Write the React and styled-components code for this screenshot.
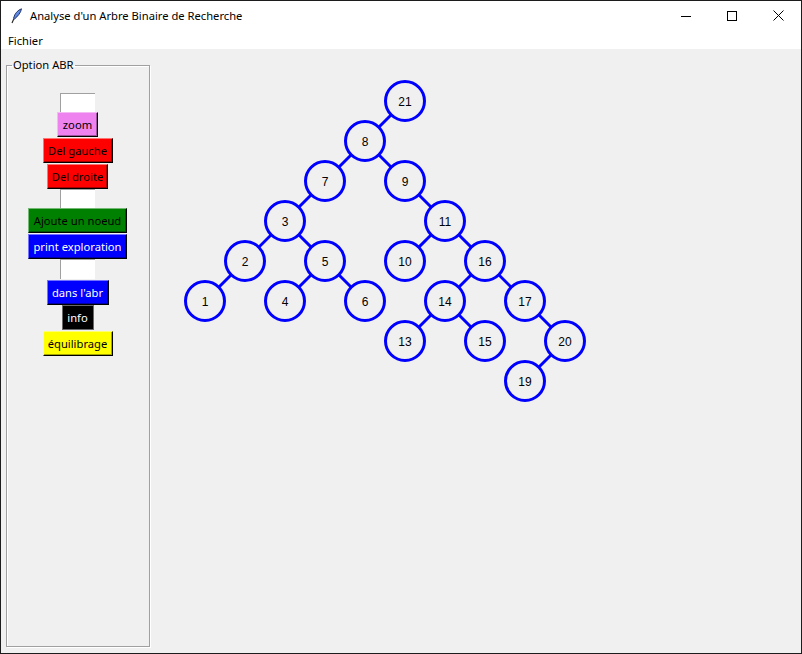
import styled, { createGlobalStyle } from "styled-components"

const GlobalStyle = createGlobalStyle`
    html, body {
        margin: 0;
        padding: 0;
        background: #ffffff;
    }
    * {
        box-sizing: border-box;
    }
`

const nodes = {
    21: [405, 101], 8: [365, 141], 7: [325, 181], 9: [405, 181],
    3: [285, 221], 11: [445, 221], 2: [245, 261], 5: [325, 261],
    10: [405, 261], 16: [485, 261], 1: [205, 301], 4: [285, 301],
    6: [365, 301], 14: [445, 301], 17: [525, 301], 13: [405, 341],
    15: [485, 341], 20: [565, 341], 19: [525, 381],
}

const edges = [
    [21, 8], [8, 7], [8, 9], [7, 3], [9, 11], [3, 2], [3, 5], [11, 10],
    [11, 16], [2, 1], [5, 4], [5, 6], [16, 14], [16, 17], [14, 13],
    [14, 15], [17, 20], [20, 19],
]

// canvas origin in window coords
const OX = 150
const OY = 49

const controls = [
    { label: "", kind: "entry" },
    { label: "zoom", bg: "#ee82ee", w: 41 },
    { label: "Del gauche", bg: "#ff0000", w: 70, gap: 1 },
    { label: "Del droite", bg: "#ff0000", w: 61, gap: 1 },
    { label: "", kind: "entry" },
    { label: "Ajoute un noeud", bg: "#008000", w: 99 },
    { label: "print exploration", bg: "#0000ff", fg: "#ffffff", w: 99, gap: 1 },
    { label: "", kind: "entry", h: 20 },
    { label: "dans l'abr", bg: "#0000ff", fg: "#ffffff", w: 62, gap: 1 },
    { label: "info", bg: "#000000", fg: "#ffffff", w: 32, dark: true },
    { label: "équilibrage", bg: "#ffff00", w: 70, gap: 1 },
]

export default function App() {
    return (
        <Fenetre>
            <GlobalStyle />
            <TitleBar>
                <Plume />
                <Titre>Analyse d'un Arbre Binaire de Recherche</Titre>
                <Controles>
                    <CtrlBtn>
                        <svg width="10" height="10" viewBox="0 0 10 10">
                            <line x1="0" y1="5.5" x2="10" y2="5.5" stroke="#000" strokeWidth="1" />
                        </svg>
                    </CtrlBtn>
                    <CtrlBtn>
                        <svg width="10" height="10" viewBox="0 0 10 10">
                            <rect x="0.5" y="0.5" width="9" height="9" fill="none" stroke="#000" strokeWidth="1" />
                        </svg>
                    </CtrlBtn>
                    <CtrlBtn>
                        <svg width="11" height="11" viewBox="0 0 11 11">
                            <path d="M0.5 0.5 L10.5 10.5 M10.5 0.5 L0.5 10.5" stroke="#000" strokeWidth="1" />
                        </svg>
                    </CtrlBtn>
                </Controles>
            </TitleBar>
            <MenuBar>
                <MenuItem>Fichier</MenuItem>
            </MenuBar>
            <Corps>
                <Cadre>
                    <Legende>Option ABR</Legende>
                    <Pile>
                        {controls.map((c, i) =>
                            c.kind === "entry" ? (
                                <Champ key={i} h={c.h} />
                            ) : (
                                <Bouton key={i} bg={c.bg} fg={c.fg} w={c.w} gap={c.gap} dark={c.dark}>
                                    {c.label}
                                </Bouton>
                            )
                        )}
                    </Pile>
                </Cadre>
                <Toile width="650" height="604" viewBox={`${OX} ${OY} 650 604`}>
                    {edges.map(([a, b]) => (
                        <line
                            key={a + "-" + b}
                            x1={nodes[a][0]} y1={nodes[a][1]}
                            x2={nodes[b][0]} y2={nodes[b][1]}
                            stroke="#0000ff" strokeWidth="3"
                        />
                    ))}
                    {Object.entries(nodes).map(([k, [x, y]]) => (
                        <g key={k}>
                            <circle cx={x} cy={y} r="19.5" fill="#f0f0f0" stroke="#0000ff" strokeWidth="3" />
                            <text x={x} y={y + 4.5} textAnchor="middle">{k}</text>
                        </g>
                    ))}
                </Toile>
            </Corps>
        </Fenetre>
    )
}

function Plume() {
    return (
        <IconBox>
            <svg width="12" height="16" viewBox="0 0 12 16">
                <defs>
                    <linearGradient id="pl" x1="0" y1="0" x2="1" y2="1">
                        <stop offset="0" stopColor="#9cc8ff" />
                        <stop offset="1" stopColor="#1846c8" />
                    </linearGradient>
                </defs>
                <path d="M10.5 0.8 C7 2 3.5 5.5 2.6 10.2 L3.6 11 C6.5 8.5 9.8 5 10.5 0.8 Z" fill="url(#pl)" stroke="#1a2a60" strokeWidth="0.9" />
                <path d="M3 10.6 L1 15" stroke="#222" strokeWidth="1.1" />
            </svg>
        </IconBox>
    )
}

const Fenetre = styled.div`
    width: 802px;
    height: 654px;
    border: 1px solid #1c1c1c;
    background: #f0f0f0;
    display: flex;
    flex-direction: column;
    overflow: hidden;
    font-family: "Noto Sans", "Open Sans", sans-serif;
    font-size: 11.2px;
`

const TitleBar = styled.div`
    height: 30px;
    background: #ffffff;
    display: flex;
    align-items: center;
`

const IconBox = styled.div`
    width: 12px;
    height: 16px;
    margin-left: 10px;
    display: flex;
`

const Titre = styled.div`
    margin-left: 7px;
    color: #000;
    line-height: 16px;
`

const Controles = styled.div`
    margin-left: auto;
    display: flex;
    height: 100%;
`

const CtrlBtn = styled.div`
    width: 46px;
    height: 100%;
    display: flex;
    align-items: center;
    justify-content: center;
`

const MenuBar = styled.div`
    height: 19px;
    background: #ffffff;
    display: flex;
    align-items: center;
    padding-left: 7px;
`

const MenuItem = styled.div`
    line-height: 16px;
    color: #000;
    margin-top: 2px;
`

const Corps = styled.div`
    flex: 1;
    display: flex;
    align-items: flex-start;
    background: #f0f0f0;
`

const Cadre = styled.fieldset`
    margin: 9px 0 0 5px;
    padding: 0;
    width: 144px;
    height: 589px;
    border: 1px solid #a0a0a0;
    box-shadow: 1px 1px 0 #ffffff, inset 1px 1px 0 #ffffff;
    min-width: 0;
`

const Legende = styled.legend`
    margin-left: 5px;
    padding: 0 1px;
    line-height: 14px;
    color: #000;
`

const Pile = styled.div`
    display: flex;
    flex-direction: column;
    align-items: center;
    padding-top: 21px;
    margin-left: -1px;
`

const Champ = styled.div`
    width: 35px;
    height: ${p => p.h || 19}px;
    background: #ffffff;
    border-top: 1px solid #a0a0a0;
    border-left: 1px solid #a0a0a0;
`

const Bouton = styled.div`
    width: ${p => p.w}px;
    height: 25px;
    margin-top: ${p => p.gap || 0}px;
    background: ${p => p.bg};
    color: ${p => p.fg || "#000"};
    font-size: 11.2px;
    display: flex;
    align-items: center;
    justify-content: center;
    white-space: nowrap;
    border-top: 1px solid ${p => (p.dark ? "#696969" : "rgba(255,255,255,0.45)")};
    border-left: 1px solid ${p => (p.dark ? "#696969" : "rgba(255,255,255,0.45)")};
    border-right: 1px solid ${p => (p.dark ? "#696969" : "#000")};
    border-bottom: 1px solid ${p => (p.dark ? "#696969" : "#000")};
    box-shadow: ${p => (p.dark ? "none" : "inset -1px -1px 0 rgba(0,0,0,0.35)")};
`

const Toile = styled.svg`
    display: block;
    flex-shrink: 0;

    text {
        font-family: "Liberation Sans", Arial, sans-serif;
        font-size: 12px;
        fill: #000;
    }
`
